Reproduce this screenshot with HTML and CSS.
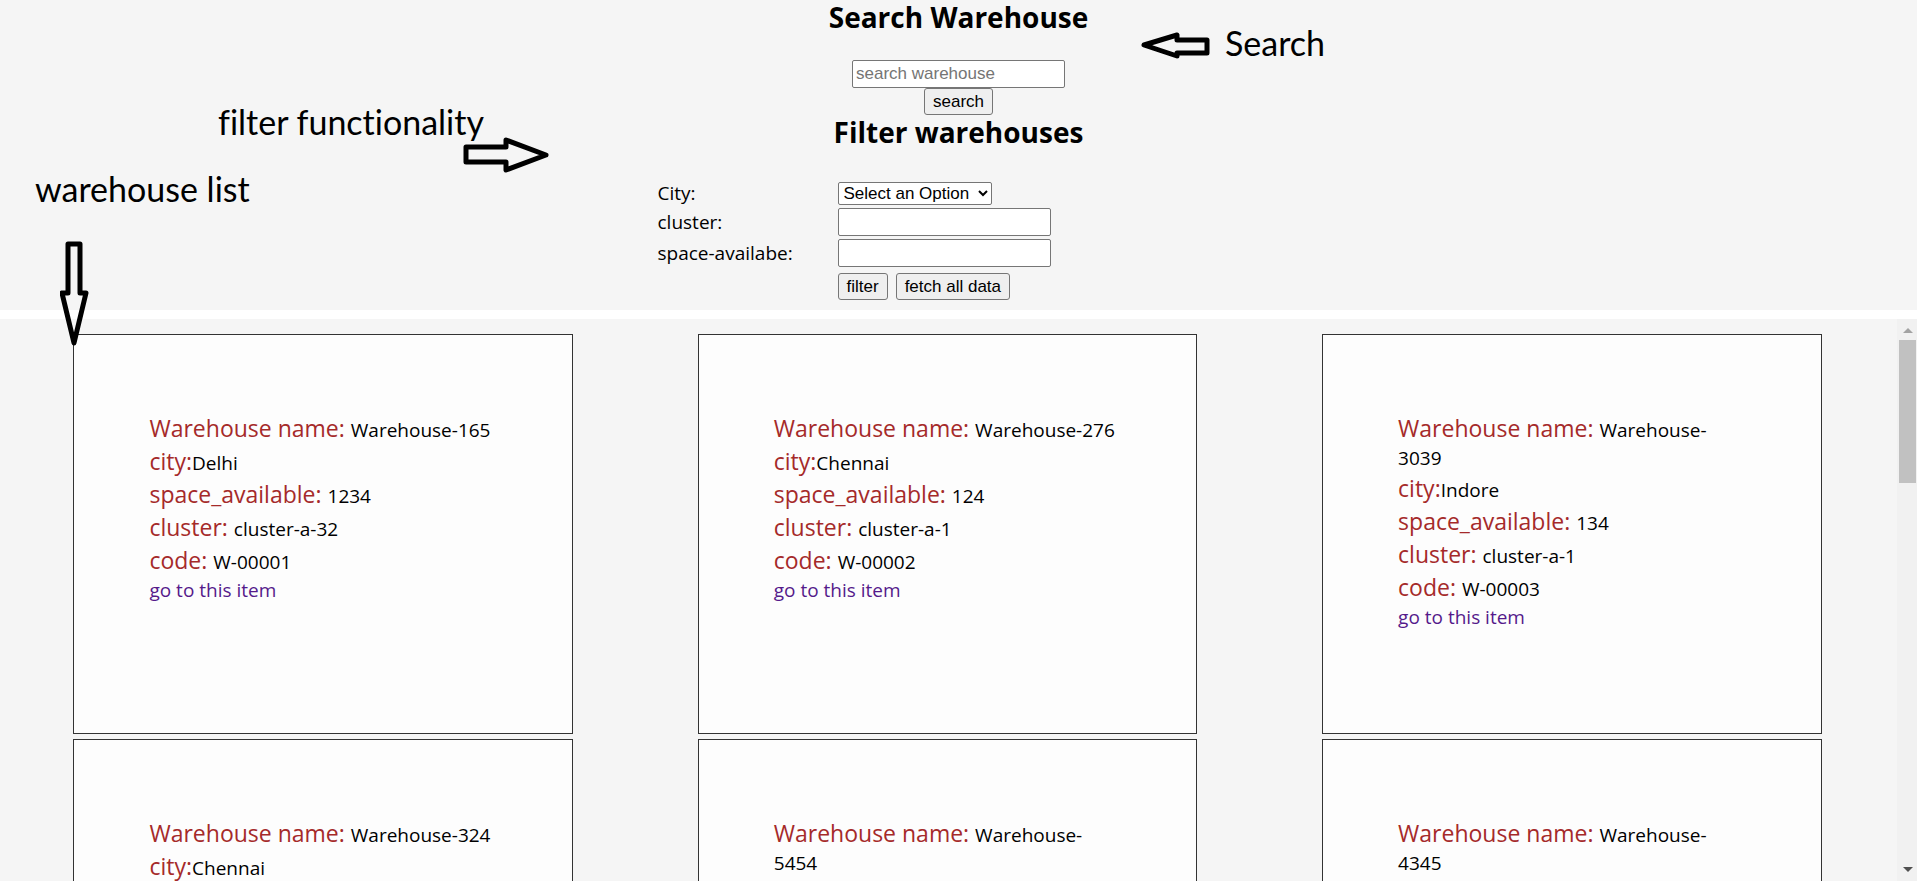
FILE: index.html
```html
<!DOCTYPE html>
<html lang="en">
<head>
<meta charset="utf-8">
<title>Warehouses</title>
<link rel="stylesheet" href="styles.css">
</head>
<body>
<header class="panel">
  <form class="search">
    <h2 class="title">Search Warehouse</h2>
    <input class="field" type="text" placeholder="search warehouse" aria-label="search warehouse">
    <button class="button" type="button">search</button>
  </form>
  <form class="filter">
    <h2 class="title">Filter warehouses</h2>
    <div class="filter-grid">
      <label for="city">City:</label>
      <select id="city" class="select"><option>Select an Option</option></select>
      <label for="cluster">cluster:</label>
      <input id="cluster" class="field" type="text">
      <label for="space">space-availabe:</label>
      <input id="space" class="field" type="text">
      <div class="actions">
        <button class="button" type="button">filter</button>
        <button class="button" type="button">fetch all data</button>
      </div>
    </div>
  </form>
</header>
<main class="list">
  <div class="cards">
    <article class="card">
      <p><span class="key">Warehouse name: </span>Warehouse-165</p>
      <p><span class="key">city:</span>Delhi</p>
      <p><span class="key">space_available: </span>1234</p>
      <p><span class="key">cluster: </span>cluster-a-32</p>
      <p><span class="key">code: </span>W-00001</p>
      <a class="link" href="#">go to this item</a>
    </article>
    <article class="card">
      <p><span class="key">Warehouse name: </span>Warehouse-276</p>
      <p><span class="key">city:</span>Chennai</p>
      <p><span class="key">space_available: </span>124</p>
      <p><span class="key">cluster: </span>cluster-a-1</p>
      <p><span class="key">code: </span>W-00002</p>
      <a class="link" href="#">go to this item</a>
    </article>
    <article class="card">
      <p><span class="key">Warehouse name: </span>Warehouse-3039</p>
      <p><span class="key">city:</span>Indore</p>
      <p><span class="key">space_available: </span>134</p>
      <p><span class="key">cluster: </span>cluster-a-1</p>
      <p><span class="key">code: </span>W-00003</p>
      <a class="link" href="#">go to this item</a>
    </article>
    <article class="card">
      <p><span class="key">Warehouse name: </span>Warehouse-324</p>
      <p><span class="key">city:</span>Chennai</p>
    </article>
    <article class="card">
      <p><span class="key">Warehouse name: </span>Warehouse-5454</p>
    </article>
    <article class="card">
      <p><span class="key">Warehouse name: </span>Warehouse-4345</p>
    </article>
  </div>
  <div class="scrollbar" aria-hidden="true">
    <svg class="scroll-arrow" width="10" height="5" viewBox="0 0 10 5"><path fill="#a3a3a3" d="M0 5 5 0 10 5Z"/></svg>
    <div class="scroll-track"><div class="scroll-thumb"></div></div>
    <svg class="scroll-arrow" width="10" height="5" viewBox="0 0 10 5"><path fill="#505050" d="M0 0 5 5 10 0Z"/></svg>
  </div>
</main>
<div class="note note-search">Search</div>
<div class="note note-filter">filter functionality</div>
<div class="note note-list">warehouse list</div>
<svg class="arrow arrow-search" width="70" height="28" viewBox="0 0 70 28"><path d="M3 14 36 4V9H66V22H36V25Z"/></svg>
<svg class="arrow arrow-filter" width="88" height="36" viewBox="0 0 88 36"><path d="M3 10H43V3L83 18 43 33V25H3Z"/></svg>
<svg class="arrow arrow-list" width="30" height="106" viewBox="0 0 30 106"><path d="M8 4H20V53H26L14 103 2 53H8Z"/></svg>
</body>
</html>
```
FILE: styles.css
```css
* { box-sizing: border-box; }
body {
  margin: 0;
  height: 100vh;
  display: flex;
  flex-direction: column;
  gap: 9px;
  padding-bottom: 2px;
  position: relative;
  overflow: hidden;
  background: #fff;
  color: #000;
  font-family: "Open Sans", sans-serif;
  font-size: 19px;
  line-height: 27px;
}
.panel { background: #f5f5f5; padding-bottom: 10px; }
.search, .filter { display: flex; flex-direction: column; align-items: center; }
.title { margin: 0 0 26px; font-size: 28px; line-height: 34px; font-weight: 700; }
.field, .select, .button {
  font-family: "Liberation Sans", Arial, sans-serif;
  font-size: 17px;
  border: 1px solid #767676;
  border-radius: 2px;
  color: #000;
}
.field { width: 213px; height: 28px; padding: 1px 3px; background: #fff; }
.field::placeholder { color: #757575; }
.button { height: 27px; padding: 0 8px; background: #efefef; border-radius: 3px; }
.select { width: 154px; height: 23px; padding: 0 1px; background: #fff; }
.filter .title { margin-bottom: 32px; }
.filter-grid {
  display: grid;
  grid-template-columns: 180px 422px;
  row-gap: 3px;
  align-items: center;
  line-height: 24px;
}
.actions { grid-column: 2; display: flex; gap: 8px; padding-top: 3px; }
.list { flex: 1; min-height: 0; display: flex; overflow: hidden; background: #f5f5f5; }
.cards {
  flex: 1;
  display: grid;
  grid-template-columns: repeat(3, 1fr);
  align-content: start;
  justify-items: center;
  row-gap: 5px;
  padding: 15px 13px 0 11px;
}
.card {
  width: 80%;
  height: 400px;
  padding: 77px 75px;
  border: 1px solid #333;
  background: #fdfdfd;
}
.card p { margin: 0; }
.key { color: #a52a2a; font-size: 23px; line-height: 33px; }
.link { color: #551a8b; text-decoration: none; }
.scrollbar {
  width: 20px;
  display: flex;
  flex-direction: column;
  align-items: center;
  padding: 9px 1px 9px 2px;
  background: #f1f1f1;
}
.scroll-arrow { display: block; flex: none; }
.scroll-track { flex: 1; width: 100%; padding: 7px 0; }
.scroll-thumb { height: 143px; background: #c1c1c1; }
.note {
  position: absolute;
  font-family: Lato, sans-serif;
  font-size: 34px;
  line-height: 40px;
  font-variant-ligatures: none;
  white-space: nowrap;
}
.note-search { left: 1225px; top: 23px; }
.note-filter { left: 218px; top: 102px; }
.note-list { left: 35px; top: 169px; }
.arrow { position: absolute; fill: none; stroke: #000; stroke-width: 5; stroke-linejoin: round; }
.arrow-search { left: 1141px; top: 31px; }
.arrow-filter { left: 463px; top: 137px; }
.arrow-list { left: 60px; top: 240px; }
```
